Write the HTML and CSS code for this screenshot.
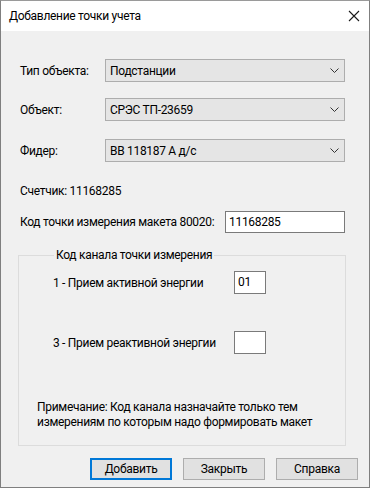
FILE: index.html
```html
<!DOCTYPE html>
<html lang="ru">
<head>
<meta charset="utf-8">
<link rel="stylesheet" href="styles.css">
</head>
<body>
<div class="window">
  <div class="titlebar">
    <span class="title">Добавление точки учета</span>
    <svg class="close" width="12" height="12" viewBox="0 0 12 12"><path d="M1 1 L11 11 M11 1 L1 11" stroke="#1a1a1a" stroke-width="1.1" fill="none"/></svg>
  </div>
  <div class="content">
    <div class="row r1">
      <span class="lbl">Тип объекта:</span>
      <div class="combo"><span>Подстанции</span><svg width="9" height="5" viewBox="0 0 9 5"><path d="M0.5 0.5 L4.5 4.5 L8.5 0.5" stroke="#333" stroke-width="1" fill="none"/></svg></div>
    </div>
    <div class="row r2">
      <span class="lbl">Объект:</span>
      <div class="combo"><span>СРЭС ТП-23659</span><svg width="9" height="5" viewBox="0 0 9 5"><path d="M0.5 0.5 L4.5 4.5 L8.5 0.5" stroke="#333" stroke-width="1" fill="none"/></svg></div>
    </div>
    <div class="row r3">
      <span class="lbl">Фидер:</span>
      <div class="combo"><span>ВВ 118187 А д/с</span><svg width="9" height="5" viewBox="0 0 9 5"><path d="M0.5 0.5 L4.5 4.5 L8.5 0.5" stroke="#333" stroke-width="1" fill="none"/></svg></div>
    </div>
    <div class="counter">Счетчик: 11168285</div>
    <div class="row code">
      <span class="lbl wide">Код точки измерения макета 80020:</span>
      <div class="input long">11168285</div>
    </div>
    <fieldset class="group">
      <legend>Код канала точки измерения</legend>
      <div class="row ch ch1">
        <span class="lbl chl">1 - Прием активной энергии</span>
        <div class="input short">01</div>
      </div>
      <div class="row ch ch2">
        <span class="lbl chl">3 - Прием реактивной энергии</span>
        <div class="input short"></div>
      </div>
      <p class="note">Примечание: Код канала назначайте только тем<br>измерениям по которым надо формировать макет</p>
    </fieldset>
    <div class="buttons">
      <div class="btn default">Добавить</div>
      <div class="btn">Закрыть</div>
      <div class="btn">Справка</div>
    </div>
  </div>
</div>
</body>
</html>
```
FILE: styles.css
```css
* { box-sizing: border-box; }
html, body { margin: 0; padding: 0; }
body {
  font-family: Roboto, "Noto Sans", sans-serif;
  font-size: 12px;
  letter-spacing: -0.3px;
  color: #000;
  background: #f0f0f0;
  white-space: nowrap;
}
.window {
  width: 370px;
  height: 488px;
  border: 1px solid #7f7f7f;
  border-top-color: #9a9a9a;
  display: flex;
  flex-direction: column;
  background: #f0f0f0;
  overflow: hidden;
}
.titlebar {
  height: 30px;
  background: #fff;
  display: flex;
  align-items: center;
  justify-content: space-between;
  padding: 0 8px 0 8px;
  flex: none;
}
.title { font-size: 12px; color: #000; }
.close { margin-right: 1px; }
.content {
  flex: 1;
  padding: 28px 11px 0 19px;
}
.row { display: flex; align-items: center; }
.lbl { width: 85px; flex: none; line-height: 16px; }
.combo {
  width: 240px;
  height: 23px;
  background: #e5e5e5;
  border: 1px solid #adadad;
  display: flex;
  align-items: center;
  justify-content: space-between;
  padding: 0 5px 0 4px;
}
.r1 { margin-bottom: 16px; }
.r2 { margin-bottom: 18px; }
.counter { margin-top: 21px; line-height: 16px; height: 16px; }
.code { margin-top: 12px; height: 22px; }
.lbl.wide { width: 205px; }
.input {
  background: #fff;
  border: 1px solid #7a7a7a;
  height: 22px;
  line-height: 20px;
  padding-left: 3px;
}
.input.long { width: 120px; }
.group {
  margin: 14px 0 0 -2px;
  width: 328px;
  height: 199px;
  border: 1px solid #dcdcdc;
  padding: 0 0 0 34px;
}
.group legend {
  padding: 0 2px;
  margin-left: 1px;
  line-height: 16px;
}
.ch1 { margin-top: 8px; }
.ch2 { margin-top: 37px; }
.lbl.chl { width: 181px; }
.input.short { width: 32px; height: 23px; }
.note {
  margin: 46px 0 0 -16px;
  line-height: 15px;
}
.buttons {
  margin-top: 12px;
  display: flex;
  justify-content: flex-end;
  gap: 11px;
}
.btn {
  width: 82px;
  height: 22px;
  background: #e1e1e1;
  border: 1px solid #adadad;
  display: flex;
  align-items: center;
  justify-content: center;
}
.btn.default { border: 2px solid #0078d7; }
```
